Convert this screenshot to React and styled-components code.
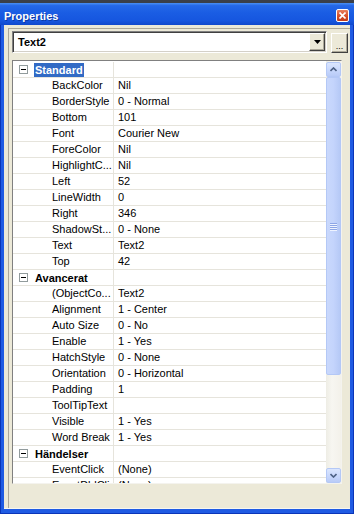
import React from 'react';
import styled, { createGlobalStyle } from 'styled-components';

const GlobalStyle = createGlobalStyle`
  body {
    margin: 0;
    background: #3a3f4a;
  }
`;

const sections = [
  {
    name: 'Standard',
    selected: true,
    rows: [
      ['BackColor', 'Nil'],
      ['BorderStyle', '0 - Normal'],
      ['Bottom', '101'],
      ['Font', 'Courier New'],
      ['ForeColor', 'Nil'],
      ['HighlightC...', 'Nil'],
      ['Left', '52'],
      ['LineWidth', '0'],
      ['Right', '346'],
      ['ShadowSt...', '0 - None'],
      ['Text', 'Text2'],
      ['Top', '42'],
    ],
  },
  {
    name: 'Avancerat',
    rows: [
      ['(ObjectCo...', 'Text2'],
      ['Alignment', '1 - Center'],
      ['Auto Size', '0 - No'],
      ['Enable', '1 - Yes'],
      ['HatchStyle', '0 - None'],
      ['Orientation', '0 - Horizontal'],
      ['Padding', '1'],
      ['ToolTipText', ''],
      ['Visible', '1 - Yes'],
      ['Word Break', '1 - Yes'],
    ],
  },
  {
    name: 'Händelser',
    rows: [
      ['EventClick', '(None)'],
      ['EventDblClick', '(None)'],
    ],
  },
];

const Window = styled.div`
  width: 354px;
  height: 514px;
  display: flex;
  flex-direction: column;
  font-family: 'Liberation Sans', Arial, sans-serif;
  font-size: 11px;
  color: #000;
`;

const TopStrip = styled.div`
  height: 3px;
  background: #3a3f4a;
`;

const TitleBar = styled.div`
  height: 22px;
  display: flex;
  align-items: flex-start;
  justify-content: space-between;
  padding: 0 5px 0 4px;
  background: linear-gradient(180deg, #4a90f4 0%, #2568e8 12%, #1a5de3 45%, #1656df 80%, #1048cc 100%);
`;

const Title = styled.span`
  padding-top: 4px;
  line-height: 18px;
  font-weight: bold;
  color: #fff;
  text-shadow: 1px 1px 0 #0b3aa8;
`;

const CloseButton = styled.div`
  margin-top: 6px;
  width: 13px;
  height: 13px;
  box-sizing: border-box;
  border: 1px solid #fff;
  border-radius: 2px;
  background: linear-gradient(180deg, #e8805f 0%, #d9532f 50%, #c23a17 100%);
  display: flex;
  align-items: center;
  justify-content: center;
`;

const Frame = styled.div`
  flex: 1;
  display: flex;
  padding: 0 4px 5px;
  background: #1f5be3;
  box-shadow: inset 1px 0 #0a35b8, inset -1px 0 #0a35b8, inset 0 -1px #0a35b8;
`;

const Client = styled.div`
  flex: 1;
  display: flex;
  flex-direction: column;
  padding: 3px 0 0 4px;
  background: #ece9d8;
  border-bottom: 1px solid #f7f6ef;
`;

const Pane = styled.div`
  flex: 1;
  display: flex;
  flex-direction: column;
  padding: 2px 1px 0 3px;
  border-top: 1px solid #aca899;
  border-left: 1px solid #aca899;
`;

const ComboRow = styled.div`
  display: flex;
  align-items: flex-end;
  gap: 4px;
`;

const Combo = styled.div`
  width: 315px;
  height: 22px;
  box-sizing: border-box;
  display: flex;
  align-items: center;
  justify-content: space-between;
  background: #fff;
  border-top: 1px solid #808080;
  border-left: 1px solid #808080;
  border-right: 1px solid #fff;
  border-bottom: 1px solid #fff;
  box-shadow: inset 1px 1px #404040, inset -1px -1px #d4d0c8;
  padding: 1px;
`;

const ComboText = styled.span`
  padding-left: 4px;
  font-weight: bold;
  font-size: 11px;
`;

const ClassicButton = styled.div`
  box-sizing: border-box;
  display: flex;
  align-items: center;
  justify-content: center;
  background: #ece9d8;
  border-top: 1px solid #fff;
  border-left: 1px solid #fff;
  border-right: 1px solid #404040;
  border-bottom: 1px solid #404040;
  box-shadow: inset -1px -1px #aca899;
`;

const DropButton = styled(ClassicButton)`
  width: 16px;
  height: 18px;
`;

const EllipsisButton = styled(ClassicButton)`
  width: 17px;
  height: 20px;
  align-items: flex-end;
  padding-bottom: 3px;
  font-size: 9px;
  line-height: 6px;
  letter-spacing: 0;
`;

const Grid = styled.div`
  margin-top: 7px;
  width: 330px;
  height: 424px;
  box-sizing: border-box;
  display: flex;
  background: #fff;
  border-top: 1px solid #808080;
  border-left: 1px solid #808080;
  border-right: 1px solid #f4f3ee;
  border-bottom: 1px solid #f4f3ee;
  overflow: hidden;
`;

const List = styled.div`
  flex: 1;
  padding-top: 1px;
  overflow: hidden;
`;

const Row = styled.div`
  height: 16px;
  box-sizing: border-box;
  display: grid;
  grid-template-columns: 100px 1fr;
  border-bottom: 1px solid #e6e4dc;
  line-height: 15px;
  white-space: nowrap;
`;

const NameCell = styled.div`
  display: flex;
  align-items: center;
  padding-left: ${(p) => (p.$category ? 6 : 39)}px;
  overflow: hidden;
`;

const ValueCell = styled.div`
  padding-left: 4px;
  border-left: 1px solid #e6e4dc;
  overflow: hidden;
`;

const ToggleBox = styled.div`
  width: 9px;
  height: 9px;
  box-sizing: border-box;
  margin-right: 6px;
  border: 1px solid #919b9c;
  background: #fff;
  display: flex;
  align-items: center;
  justify-content: center;

  &::after {
    content: '';
    width: 5px;
    height: 1px;
    background: #000;
  }
`;

const CategoryLabel = styled.span`
  height: 14px;
  line-height: 14px;
  padding: 0 1px;
  font-weight: bold;
  color: ${(p) => (p.$selected ? '#fff' : '#000')};
  background: ${(p) => (p.$selected ? '#316ac5' : 'transparent')};
`;

const ScrollBar = styled.div`
  width: 15px;
  display: flex;
  flex-direction: column;
  background: linear-gradient(90deg, #eeede5 0%, #f7f6f1 40%, #f3f1ea 100%);
  padding-top: 1px;
`;

const ScrollButton = styled.div`
  height: 15px;
  box-sizing: border-box;
  border: 1px solid #b4c8f6;
  border-radius: 2px;
  background: linear-gradient(180deg, #dbe6fe 0%, #c6d6fc 60%, #b9cbf7 100%);
  display: flex;
  align-items: center;
  justify-content: center;
`;

const Track = styled.div`
  flex: 1;
  display: flex;
  flex-direction: column;
`;

const Thumb = styled.div`
  height: 298px;
  box-sizing: border-box;
  border: 1px solid #b4c8f6;
  border-radius: 2px;
  background: linear-gradient(90deg, #c9d8fc 0%, #c4d4fc 50%, #b6c9f6 100%);
  display: flex;
  flex-direction: column;
  align-items: center;
  justify-content: center;
  gap: 1px;
`;

const Grip = styled.div`
  width: 7px;
  height: 1px;
  background: #8ea6e6;
  box-shadow: 0 1px #eef3ff;
`;

const Chevron = ({ down }) => (
  <svg width="7" height="5" viewBox="0 0 7 5">
    <path
      d={down ? 'M0.5 1 L3.5 4 L6.5 1' : 'M0.5 4 L3.5 1 L6.5 4'}
      fill="none"
      stroke="#4d6185"
      strokeWidth="1.6"
    />
  </svg>
);

const App = () => (
  <Window>
    <GlobalStyle />
    <TopStrip />
    <TitleBar>
      <Title>Properties</Title>
      <CloseButton>
        <svg width="7" height="7" viewBox="0 0 7 7">
          <path d="M0.5 0.5 L6.5 6.5 M6.5 0.5 L0.5 6.5" stroke="#fff" strokeWidth="1.6" />
        </svg>
      </CloseButton>
    </TitleBar>
    <Frame>
      <Client>
        <Pane>
          <ComboRow>
            <Combo>
              <ComboText>Text2</ComboText>
              <DropButton>
                <svg width="7" height="4" viewBox="0 0 7 4">
                  <path d="M0 0 H7 L3.5 4 Z" fill="#000" />
                </svg>
              </DropButton>
            </Combo>
            <EllipsisButton>...</EllipsisButton>
          </ComboRow>
          <Grid>
            <List>
              {sections.map((section) => (
                <React.Fragment key={section.name}>
                  <Row>
                    <NameCell $category>
                      <ToggleBox />
                      <CategoryLabel $selected={section.selected}>{section.name}</CategoryLabel>
                    </NameCell>
                    <ValueCell />
                  </Row>
                  {section.rows.map(([name, value]) => (
                    <Row key={name}>
                      <NameCell>{name}</NameCell>
                      <ValueCell>{value}</ValueCell>
                    </Row>
                  ))}
                </React.Fragment>
              ))}
            </List>
            <ScrollBar>
              <ScrollButton>
                <Chevron />
              </ScrollButton>
              <Track>
                <Thumb>
                  <Grip />
                  <Grip />
                  <Grip />
                  <Grip />
                </Thumb>
              </Track>
              <ScrollButton>
                <Chevron down />
              </ScrollButton>
            </ScrollBar>
          </Grid>
        </Pane>
      </Client>
    </Frame>
  </Window>
);

export default App;
